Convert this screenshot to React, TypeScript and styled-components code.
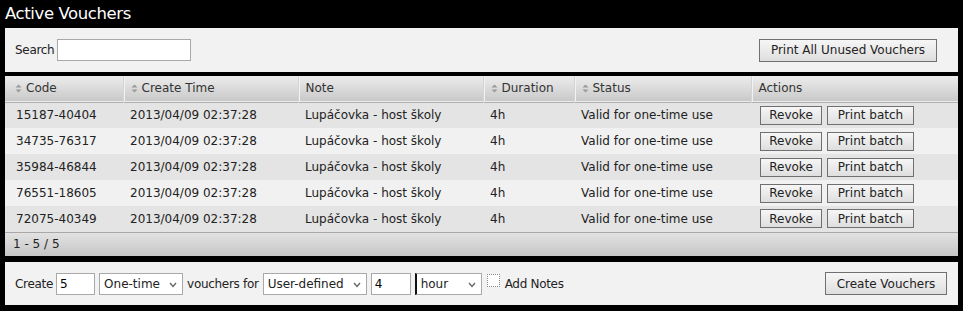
import React from "react";
import styled, { createGlobalStyle } from "styled-components";

const Global = createGlobalStyle`
  html, body { margin: 0; padding: 0; background: #000; }
  body { font-family: "DejaVu Sans", Verdana, sans-serif; font-size: 12px; color: #222; }
  * { box-sizing: border-box; }
`;

const Page = styled.div`
  width: 963px;
  height: 311px;
  background: #000;
  padding: 0 5px;
  display: flex;
  flex-direction: column;
`;

const Title = styled.h1`
  margin: 0;
  height: 28px;
  line-height: 28px;
  font-size: 16.5px;
  letter-spacing: -0.4px;
  font-weight: normal;
  color: #fff;
`;

const Panel = styled.div<{ $h: number }>`
  height: ${(p) => p.$h}px;
  background: #f2f2f2;
  display: flex;
  align-items: center;
  padding: 0 11px 0 10px;
  gap: 4px;
  flex: none;
`;

const Spacer = styled.div`
  flex: 1;
`;

const Label = styled.label`
  font-size: 12px;
  letter-spacing: -0.3px;
  color: #222;
  display: flex;
  align-items: center;
  gap: 3px;
`;

const TextInput = styled.input<{ $w: number }>`
  width: ${(p) => p.$w}px;
  height: 22px;
  border: 1px solid #a9a9a9;
  background: #fff;
  font: inherit;
  font-size: 12px;
  letter-spacing: 0;
  padding: 0 3px;
  color: #000;
`;

const Button = styled.button<{ $w?: number; $h?: number }>`
  ${(p) => (p.$w ? `width: ${p.$w}px;` : "")}
  height: ${(p) => p.$h ?? 23}px;
  border: 1px solid #707070;
  background: linear-gradient(#f6f6f6, #dedede);
  font-family: inherit;
  font-size: 12px;
  color: #222;
  padding: 0 6px;
  border-radius: 0;
  white-space: nowrap;
`;

const Gap = styled.div<{ $h: number }>`
  height: ${(p) => p.$h}px;
  flex: none;
`;

const Table = styled.table`
  width: 953px;
  border-collapse: collapse;
  table-layout: fixed;
  font-size: 12px;
  flex: none;
`;

const HeadRow = styled.tr`
  height: 26px;
  background: linear-gradient(#ececec, #c9c9c9);
  border-bottom: 1px solid #b0b0b0;
`;

const Th = styled.th<{ $first?: boolean }>`
  text-align: left;
  font-weight: normal;
  color: #333;
  padding: 0 0 1px ${(p) => (p.$first ? 10 : 7)}px;
  border-left: ${(p) => (p.$first ? "none" : "1px solid #d4d4d4")};
  box-shadow: ${(p) => (p.$first ? "none" : "inset 1px 0 0 #f2f2f2")};
  white-space: nowrap;
`;

const SortIcon = styled.svg`
  width: 7px;
  height: 9px;
  margin-right: 4px;
  vertical-align: -1px;
`;

const Row = styled.tr<{ $odd: boolean }>`
  height: 26px;
  background: ${(p) => (p.$odd ? "#e4e4e4" : "#f1f1f1")};
`;

const Td = styled.td<{ $first?: boolean }>`
  padding: 0 0 0 ${(p) => (p.$first ? 11 : 7)}px;
  color: #222;
  white-space: nowrap;
`;

const Actions = styled.div`
  display: flex;
  gap: 5px;
  padding-left: 2px;
`;

const FootRow = styled.tr`
  height: 24px;
  background: linear-gradient(#e2e2e2, #c6c6c6);
  border-top: 1px solid #a8a8a8;
`;

const FootCell = styled.td`
  padding: 0 0 0 8px;
  color: #222;
`;

const SelectWrap = styled.span<{ $w: number }>`
  position: relative;
  display: inline-block;
  width: ${(p) => p.$w}px;
  height: 22px;
`;

const Select = styled.select<{ $focused?: boolean }>`
  appearance: none;
  width: 100%;
  height: 100%;
  border: 1px solid #a9a9a9;
  ${(p) => (p.$focused ? "border-left: 2px solid #111;" : "")}
  background: #fff;
  font-family: inherit;
  font-size: 12px;
  color: #222;
  padding: 0 0 0 4px;
  border-radius: 0;
  outline: none;
`;

const Chevron = styled.svg`
  position: absolute;
  right: 6px;
  top: 9px;
  width: 8px;
  height: 6px;
  pointer-events: none;
`;

const Check = styled.input`
  appearance: none;
  width: 13px;
  height: 13px;
  margin: 0 2px 0 1px;
  border: 1px dotted #888;
  background: #fff;
  position: relative;
  top: -3px;
`;

const Sort = () => (
  <SortIcon viewBox="0 0 7 9">
    <path d="M3.5 0.5 L6.5 3.5 L0.5 3.5 Z" fill="#9a9a9a" />
    <path d="M0.5 5.5 L6.5 5.5 L3.5 8.5 Z" fill="#9a9a9a" />
  </SortIcon>
);

const Dropdown = ({
  w,
  value,
  options,
  focused,
}: {
  w: number;
  value: string;
  options: string[];
  focused?: boolean;
}) => (
  <SelectWrap $w={w}>
    <Select defaultValue={value} $focused={focused}>
      {options.map((o) => (
        <option key={o}>{o}</option>
      ))}
    </Select>
    <Chevron viewBox="0 0 8 6">
      <path d="M1 1 L4 4.5 L7 1" stroke="#666" strokeWidth="1.4" fill="none" />
    </Chevron>
  </SelectWrap>
);

const codes = ["15187-40404", "34735-76317", "35984-46844", "76551-18605", "72075-40349"];

export default function App() {
  return (
    <>
      <Global />
      <Page>
        <Title>Active Vouchers</Title>
        <Panel $h={44}>
          <Label>
            Search <TextInput $w={134} />
          </Label>
          <Spacer />
          <Button $w={178} style={{ marginRight: 10 }}>Print All Unused Vouchers</Button>
        </Panel>
        <Gap $h={4} />
        <Table>
          <colgroup>
            <col style={{ width: 118 }} />
            <col style={{ width: 175 }} />
            <col style={{ width: 185 }} />
            <col style={{ width: 91 }} />
            <col style={{ width: 177 }} />
            <col style={{ width: 207 }} />
          </colgroup>
          <thead>
            <HeadRow>
              <Th $first>
                <Sort />Code
              </Th>
              <Th>
                <Sort />Create Time
              </Th>
              <Th>Note</Th>
              <Th>
                <Sort />Duration
              </Th>
              <Th>
                <Sort />Status
              </Th>
              <Th>Actions</Th>
            </HeadRow>
          </thead>
          <tbody>
            {codes.map((c, i) => (
              <Row key={c} $odd={i % 2 === 0}>
                <Td $first>{c}</Td>
                <Td>2013/04/09 02:37:28</Td>
                <Td>Lupáčovka - host školy</Td>
                <Td>4h</Td>
                <Td>Valid for one-time use</Td>
                <Td>
                  <Actions>
                    <Button $w={62} $h={19}>Revoke</Button>
                    <Button $w={87} $h={19}>Print batch</Button>
                  </Actions>
                </Td>
              </Row>
            ))}
          </tbody>
          <tfoot>
            <FootRow>
              <FootCell colSpan={6}>1 - 5 / 5</FootCell>
            </FootRow>
          </tfoot>
        </Table>
        <Gap $h={6} />
        <Panel $h={43}>
          <Label>
            Create <TextInput $w={39} defaultValue="5" />
          </Label>
          <Dropdown w={84} value="One-time" options={["One-time", "Multi-use"]} />
          <Label>vouchers for</Label>
          <Dropdown w={104} value="User-defined" options={["User-defined", "1 day"]} />
          <TextInput $w={40} defaultValue="4" />
          <Dropdown w={67} value="hour" options={["hour", "day", "week"]} focused />
          <Label>
            <Check type="checkbox" />
            Add Notes
          </Label>
          <Spacer />
          <Button $w={122}>Create Vouchers</Button>
        </Panel>
      </Page>
    </>
  );
}
